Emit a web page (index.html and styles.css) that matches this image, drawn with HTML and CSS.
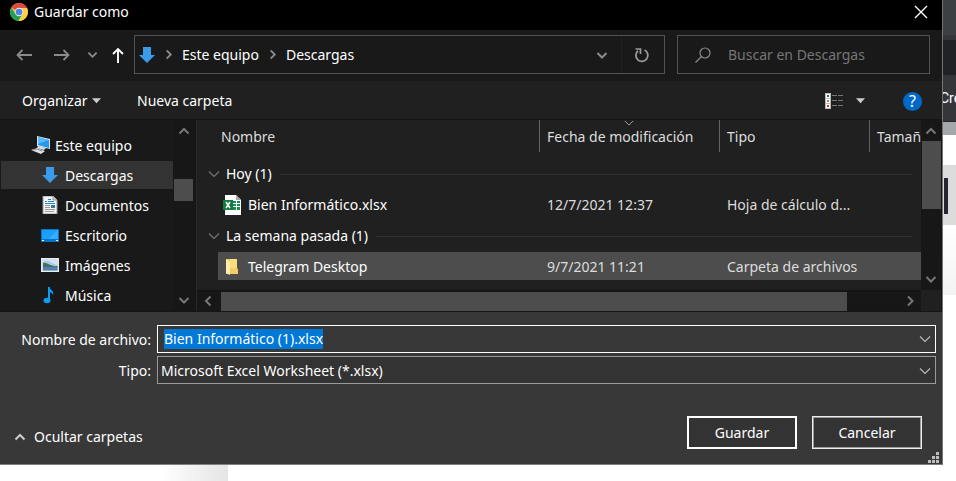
FILE: index.html
```html
<!DOCTYPE html>
<html lang="es">
<head>
<meta charset="utf-8">
<title>Guardar como</title>
<link rel="stylesheet" href="styles.css">
</head>
<body>
<svg class="defs" aria-hidden="true">
  <symbol id="down-arrow" viewBox="0 0 16 16"><path d="M4 0h8v8h4l-8 8-8-8h4z" fill="#3a9bea"/></symbol>
  <symbol id="chev-down" viewBox="0 0 12 12"><path d="M1.500 4l4.500 4.500 4.500-4.500" fill="none" stroke="currentColor" stroke-width="2"/></symbol>
  <symbol id="chev-thin" viewBox="0 0 12 12"><path d="M1 3.500l5 5 5-5" fill="none" stroke="currentColor" stroke-width="1.100"/></symbol>
  <symbol id="chev-up" viewBox="0 0 12 12"><path d="M1.500 8.500l4.500-4.500 4.500 4.500" fill="none" stroke="currentColor" stroke-width="2"/></symbol>
  <symbol id="chev-right" viewBox="0 0 12 12"><path d="M4 1.500l4.500 4.500-4.500 4.500" fill="none" stroke="currentColor" stroke-width="2"/></symbol>
  <symbol id="chev-left" viewBox="0 0 12 12"><path d="M8.500 1.500l-4.500 4.500 4.500 4.500" fill="none" stroke="currentColor" stroke-width="2"/></symbol>
  <symbol id="triangle" viewBox="0 0 10 6"><path d="M0 0h10l-5 5.500z" fill="currentColor"/></symbol>
</svg>
<div class="screen">
  <section class="dialog" role="dialog" aria-labelledby="dialog-title">
    <header class="titlebar">
      <svg class="chrome" viewBox="0 0 18 18"><circle cx="9" cy="9" r="9" fill="#f2c12e"/><path d="M9 9L1.200 4.500A9 9 0 0 1 16.800 4.500L17 5H9z" fill="#dd4b3e"/><path d="M1.200 4.500A9 9 0 0 0 8.500 18L12.500 11 9 9 5.400 11z" fill="#1da05a"/><path d="M9 5h8a9 9 0 0 1-8.500 13l4-7z" fill="#fdd045"/><circle cx="9" cy="9" r="4.200" fill="#eee"/><circle cx="9" cy="9" r="3.300" fill="#4a84e8"/></svg>
      <h1 id="dialog-title">Guardar como</h1>
      <button class="plain close" aria-label="Cerrar"><svg width="14" height="14" viewBox="0 0 14 14"><path d="M1 1l12 12M13 1L1 13" stroke="#fff" stroke-width="1.400"/></svg></button>
    </header>

    <nav class="navbar" aria-label="Ubicación">
      <div class="history">
        <button class="plain" aria-label="Atrás"><svg width="16" height="12" viewBox="0 0 16 12"><path d="M16 6H1.500M6.500 1l-5 5 5 5" fill="none" stroke="#8b8b8b" stroke-width="1.800"/></svg></button>
        <button class="plain" aria-label="Adelante"><svg width="16" height="12" viewBox="0 0 16 12"><path d="M0 6h14.500M9.500 1l5 5-5 5" fill="none" stroke="#8b8b8b" stroke-width="1.800"/></svg></button>
        <button class="plain recent" aria-label="Recientes"><svg class="dim" width="11" height="11"><use href="#chev-down"/></svg></button>
        <button class="plain up" aria-label="Subir"><svg width="12" height="16" viewBox="0 0 12 16"><path d="M6 16V2M1 7l5-5 5 5" fill="none" stroke="#fff" stroke-width="1.900"/></svg></button>
      </div>
      <div class="address">
        <svg width="16" height="16"><use href="#down-arrow"/></svg>
        <svg class="dim" width="11" height="11"><use href="#chev-right"/></svg>
        <a href="#equipo">Este equipo</a>
        <svg class="dim" width="11" height="11"><use href="#chev-right"/></svg>
        <a href="#descargas">Descargas</a>
        <button class="plain expand" aria-label="Ubicaciones anteriores"><svg class="dim" width="12" height="12"><use href="#chev-down"/></svg></button>
        <button class="plain refresh" aria-label="Actualizar"><svg width="16" height="16" viewBox="0 0 16 16"><path d="M10.500 3A6 6 0 1 1 4 3.800" fill="none" stroke="#999" stroke-width="1.800"/><path d="M1.500 2h5v5" fill="none" stroke="#999" stroke-width="1.700"/></svg></button>
      </div>
      <label class="search">
        <svg width="16" height="16" viewBox="0 0 16 16"><circle cx="10" cy="6" r="5" fill="none" stroke="#8b8b8b" stroke-width="1.200"/><path d="M6.500 9.500L.5 15.500" stroke="#8b8b8b" stroke-width="1.300"/></svg>
        <input type="search" aria-label="Buscar" placeholder="Buscar en Descargas">
      </label>
    </nav>

    <div class="toolbar">
      <button class="plain organize">Organizar <svg class="light" width="9" height="6"><use href="#triangle"/></svg></button>
      <button class="plain">Nueva carpeta</button>
      <button class="plain view" aria-label="Cambiar la vista">
        <svg width="18" height="16" viewBox="0 0 18 16"><path d="M0 0h6v16H0z" fill="#bdbdb5"/><path d="M1 1h4v4H1zM1 6h4v4H1zM1 11h4v4H1z" fill="#fff"/><path d="M2 2h2v2H2z" fill="#2b73a8"/><path d="M2 7h2v2H2z" fill="#a58445"/><path d="M2 12h2v2H2z" fill="#d53a20"/><path d="M7 2.500h5M13 2.500h5M7 7.500h5M13 7.500h5M7 12.500h5M13 12.500h5" stroke="#777"/></svg>
        <svg class="light" width="9" height="6"><use href="#triangle"/></svg>
      </button>
      <button class="plain help" aria-label="Ayuda">?</button>
    </div>

    <div class="browser">
      <ul class="tree">
        <li class="root"><svg width="20" height="18" viewBox="0 0 20 18"><path d="M6 0l13 3v10L6 10z" fill="#d5e4ee"/><path d="M7 1l11 3v8L7 9z" fill="#2498f0"/><path d="M7 1l11 3-11 4z" fill="#56bbff"/><path d="M7 10l8 2-2 2-7-2zM0 14l6-2 8 3-4 3z" fill="#dce0e2"/><path d="M2 14l4-1 5 2" stroke="#888" fill="none"/></svg><span>Este equipo</span></li>
        <li class="current"><svg width="16" height="16"><use href="#down-arrow"/></svg><span>Descargas</span></li>
        <li><svg width="16" height="18" viewBox="0 0 16 18"><path d="M1 0h10l4 4v14H1z" fill="#f3f3f3" stroke="#999"/><path d="M11 0v4h4" fill="#ccc" stroke="#999"/><path d="M3 5.500h2M6 3.500h3M6 5.500h6M3 7.500h10" stroke="#2489c5"/><path d="M3 9.500h5M3 11.500h5M3 13.500h10M3 15.500h9" stroke="#999"/><path d="M9 9h4v3H9z" fill="#357c9d"/></svg><span>Documentos</span></li>
        <li><svg width="18" height="14" viewBox="0 0 18 14"><path d="M0 1h18v13H0z" fill="#0874c8"/><path d="M1 2h16v9H1z" fill="#1a9fff"/><path d="M17 2v9H7z" fill="#36adff"/><path d="M1 12.500h2M15 12.500h2" stroke="#fff"/></svg><span>Escritorio</span></li>
        <li><svg width="18" height="14" viewBox="0 0 18 14"><path d="M0 0h18v14H0z" fill="#eee"/><path d="M1.500 1.500h15v11h-15z" fill="#a9cbe6"/><path d="M2 5c4-1 8 4 14.500 3v2H2z" fill="#467064"/><path d="M2 9h14.500v3.500H2z" fill="#5383ad"/><path d="M2 4q5-3 9 1l5 2V2H2z" fill="#d3e5f0"/></svg><span>Imágenes</span></li>
        <li><svg width="16" height="18" viewBox="0 0 16 18"><path d="M7 1v13" stroke="#0b9cf4" stroke-width="2"/><ellipse cx="5" cy="14.500" rx="3.500" ry="2.700" fill="#0b9cf4"/><path d="M7 0c0 4 6 4 4 10 0-3-2-4-4-4z" fill="#0b9cf4"/></svg><span>Música</span></li>
      </ul>
      <div class="vscroll tree-scroll"><svg width="12" height="12"><use href="#chev-up"/></svg><span class="thumb"></span><svg width="12" height="12"><use href="#chev-down"/></svg></div>
      <div class="files">
        <div class="list">
          <table>
            <colgroup><col class="c-indent"><col class="c-name"><col class="c-date"><col class="c-type"><col></colgroup>
            <thead><tr><th></th><th class="first"><span>Nombre</span></th><th><span>Fecha de modificación</span><svg class="sort" width="10" height="10"><use href="#chev-thin"/></svg></th><th><span>Tipo</span></th><th><span>Tamaño</span></th></tr></thead>
            <tbody>
              <tr class="group"><td colspan="5"><div><svg width="12" height="12"><use href="#chev-thin"/></svg><span>Hoy (1)</span></div></td></tr>
              <tr><td></td><td class="name"><div><svg width="18" height="20" viewBox="0 0 18 20"><path d="M2 0h11l5 5v15H2z" fill="#fff"/><path d="M13 0v5h5z" fill="#aaa"/><path d="M10 6h7v9h-7z" fill="#188b50"/><path d="M10 8.500h7M10 11.500h7M13.500 6v9" stroke="#fff"/><path d="M0 5h10v10H0z" fill="#107c41"/><path d="M3 7l4 6M7 7l-4 6" stroke="#fff" stroke-width="1.500"/></svg>Bien Informático.xlsx</div></td><td>12/7/2021 12:37</td><td>Hoja de cálculo d...</td><td></td></tr>
              <tr class="group"><td colspan="5"><div><svg width="12" height="12"><use href="#chev-thin"/></svg><span>La semana pasada (1)</span></div></td></tr>
              <tr class="hover"><td></td><td class="name"><div><svg width="18" height="18" viewBox="0 0 18 18"><path d="M3 1h11v9l1 1v5H3z" fill="#f3cc64"/><path d="M7 1h7v9H7z" fill="#fbdc7e"/><path d="M3 1l4 3v13l-4-2z" fill="#ffedab"/></svg>Telegram Desktop</div></td><td>9/7/2021 11:21</td><td>Carpeta de archivos</td><td></td></tr>
            </tbody>
          </table>
        </div>
        <div class="vscroll list-scroll"><svg width="12" height="12"><use href="#chev-up"/></svg><span class="thumb"></span><svg width="12" height="12"><use href="#chev-down"/></svg></div>
        <div class="hscroll"><svg width="12" height="12"><use href="#chev-left"/></svg><span class="thumb"></span><svg width="12" height="12"><use href="#chev-right"/></svg></div>
        <div class="corner"></div>
      </div>
    </div>

    <form class="save">
      <div class="fields">
        <label for="filename">Nombre de archivo:</label>
        <div class="combo"><input id="filename" type="text" value="Bien Informático (1).xlsx" spellcheck="false" autocomplete="off"><svg width="12" height="12"><use href="#chev-thin"/></svg></div>
        <label for="filetype">Tipo:</label>
        <div class="combo type"><select id="filetype"><option>Microsoft Excel Worksheet (*.xlsx)</option></select><svg width="12" height="12"><use href="#chev-thin"/></svg></div>
      </div>
      <div class="actions">
        <button type="button" class="plain hide"><svg width="12" height="12"><use href="#chev-up"/></svg>Ocultar carpetas</button>
        <button type="submit" class="btn primary">Guardar</button>
        <button type="button" class="btn">Cancelar</button>
      </div>
      <svg class="grip" width="11" height="11" viewBox="0 0 11 11"><path d="M8 0h3v3H8zM4 4h3v3H4zM8 4h3v3H8zM0 8h3v3H0zM4 8h3v3H4zM8 8h3v3H8z" fill="#bdbdbd"/></svg>
    </form>
  </section>

  <aside class="page-edge">
    <div class="tabs"></div>
    <div class="omnibox"></div>
    <div class="bookmarks"><span>Cre</span></div>
    <div class="strip"></div>
    <div class="heading"><span></span></div>
    <div class="fade"></div>
  </aside>
  <div class="page-bottom"></div>
</div>
<script src="script.js"></script>
</body>
</html>
```
FILE: styles.css
```css
* { box-sizing: border-box; }
body { margin: 0; background: #fff; color: #fff; font: 14px/20px "Noto Sans", "Open Sans", sans-serif; }
svg { display: block; flex: none; }
.defs { position: absolute; width: 0; height: 0; }
input, select, button { font: inherit; color: inherit; }
.plain { display: flex; align-items: center; padding: 0; border: 0; background: none; white-space: nowrap; }
.dim { color: #8b8b8b; }
.light { color: #ccc; }

.screen { display: grid; grid-template-columns: minmax(0, 1fr) 14px; grid-template-rows: auto 1fr; min-height: 100vh; overflow: hidden; }
.dialog { background: #383838; border-bottom: 1px solid #808080; }

.titlebar { display: flex; align-items: center; height: 30px; padding: 0 14px 7px 10px; background: #000; }
.chrome { width: 18px; height: 18px; }
.titlebar h1 { margin: 0 0 0 6px; font-size: 14px; font-weight: 400; line-height: 20px; }
.close { margin-left: auto; }

.navbar { display: flex; align-items: center; gap: 12px; padding: 5px 12px 7px 16px; background: #191919; }
.history { display: flex; align-items: center; gap: 22px; width: 106px; }
.history .recent { margin-left: -5px; }
.history .up { margin-left: -8px; }
.address { display: flex; align-items: center; flex: 1; gap: 8px; height: 39px; padding-left: 4px; border: 1px solid #535353; }
.address a { color: inherit; text-decoration: none; white-space: nowrap; }
.expand { justify-content: center; width: 40px; height: 100%; margin-left: auto; border-right: 1px solid #202020; }
.refresh { width: 34px; height: 100%; padding-left: 4px; }
.search { display: flex; align-items: center; gap: 17px; width: 253px; height: 39px; padding-left: 17px; border: 1px solid #535353; }
.search input { flex: 1; min-width: 0; padding: 0; border: 0; outline: 0; background: none; }
.search input::placeholder { color: #767676; opacity: 1; }

.toolbar { display: flex; align-items: center; height: 39px; padding: 2px 20px 0 22px; background: #202020; border-bottom: 1px solid #151515; }
.organize { gap: 4px; width: 115px; }
.view { gap: 13px; margin-left: auto; }
.help { justify-content: center; width: 19px; height: 19px; margin-left: 38px; border-radius: 50%; background: #0069c8; font-size: 16px; }

.browser { display: grid; grid-template-columns: 173px 24px minmax(0, 1fr); height: 192px; background: #191919; border-bottom: 1px solid #151515; border-right: 1px solid #151515; }
.tree { margin: 0; padding: 11px 0 0 1px; list-style: none; }
.tree li { display: flex; align-items: center; gap: 6px; height: 28px; margin-bottom: 2px; padding-left: 40px; }
.tree span { padding-top: 2px; }
.tree svg { width: 18px; }
.tree .root { gap: 4px; padding-left: 30px; }
.tree .root svg { width: 20px; }
.tree .current { background: #333; }
.vscroll { display: flex; flex-direction: column; align-items: center; justify-content: space-between; padding: 5px 0; background: #171717; color: #777; }
.thumb { background: #4d4d4d; }
.tree-scroll { padding-right: 2px; border-right: 1px solid #292929; }
.tree-scroll .thumb { width: 19px; height: 22px; margin-bottom: 52px; }
.files { display: grid; grid-template: minmax(0, 1fr) 21px / minmax(0, 1fr) 20px; background: #202020; }
.list { overflow: hidden; }
.list-scroll .thumb { width: 19px; height: 68px; margin-bottom: 60px; }
.hscroll { display: flex; align-items: center; gap: 7px; padding: 0 5px; background: #171717; border-top: 1px solid #131313; color: #777; }
.hscroll .thumb { flex: 1; height: 19px; }
.hscroll svg:last-child { margin-left: 50px; }

table { width: 100%; table-layout: fixed; border-collapse: collapse; }
.c-indent { width: 21px; }
.c-name { width: 321px; }
.c-date { width: 180px; }
.c-type { width: 150px; }
th { position: relative; height: 36px; padding: 0 0 4px; font-weight: 400; text-align: left; color: #ddd; overflow: hidden; white-space: nowrap; }
th span { display: block; height: 32px; padding-left: 7px; border-left: 1px solid #636363; line-height: 34px; }
th.first span { padding-left: 3px; border: 0; }
.sort { position: absolute; top: -2px; left: 47%; color: #aaa; }
td { height: 28px; padding: 2px 0 0 8px; color: #ddd; overflow: hidden; white-space: nowrap; }
td.name { padding-left: 5px; color: #fff; }
.name div { display: flex; align-items: center; gap: 7px; }
.group td { height: 34px; padding: 2px 9px 0 11px; color: #fff; }
.group div { display: flex; align-items: center; }
.group svg { margin-right: 6px; color: #777; }
.group div::after { content: ""; flex: 1; height: 1px; margin-left: 8px; background: #303030; }
.hover td + td { background: #4d4d4d; }

.save { position: relative; padding: 13px 6px 15px 0; }
.fields { display: grid; grid-template-columns: 151px minmax(0, 1fr); gap: 3px 6px; align-items: center; }
.fields label { padding-top: 2px; text-align: right; white-space: nowrap; }
.combo { display: flex; align-items: center; height: 28px; padding: 0 4px 0 6px; border: 1px solid #fff; }
.combo input, .combo select { flex: 1; min-width: 0; height: 20px; padding: 0; border: 0; outline: 0; background: none; appearance: none; }
.combo input::selection { color: #fff; background: #0078d7; }
.combo svg { color: #bbb; }
.type { padding: 2px 4px 0 3px; background: #333; border-color: #999; }
.actions { display: flex; align-items: center; gap: 15px; margin-top: 32px; padding: 0 14px; }
.hide { gap: 8px; margin: 8px auto 0 0; }
.hide svg { color: #ccc; }
.btn { width: 110px; height: 33px; padding: 0; border: 1px solid #eee; outline: 1px solid #999; outline-offset: -2px; background: #333; }
.primary { border: 2px solid #fff; outline: 0; }
.grip { position: absolute; right: 3px; bottom: 1px; }

.page-edge { overflow: hidden; background: #fff; border-left: 1px solid #70757a; }
.tabs { height: 40px; background: #3c4043; border-bottom: 5px solid #35363a; }
.omnibox { height: 35px; background: #202124; }
.bookmarks { height: 47px; padding-top: 13px; background: #35363a; border-bottom: 1px solid #292a2d; font: 14px/20px Roboto, sans-serif; white-space: nowrap; }
.bookmarks span { margin-left: -3px; }
.strip { height: 13px; background: #a5a8ab; }
.heading { height: 60px; margin-top: 30px; padding: 13px 1px; background: #dcdcdc; }
.heading span { display: block; width: 4px; height: 36px; background: #252630; }
.fade { height: 70px; background: linear-gradient(#fff, #f3f3f3); }
.page-bottom { grid-column: 1 / -1; width: 228px; background: linear-gradient(90deg, #fff 160px, #e5e5e5); }
```
FILE: script.js
```javascript
const filename = document.getElementById("filename");
filename.focus();
filename.select();
```
